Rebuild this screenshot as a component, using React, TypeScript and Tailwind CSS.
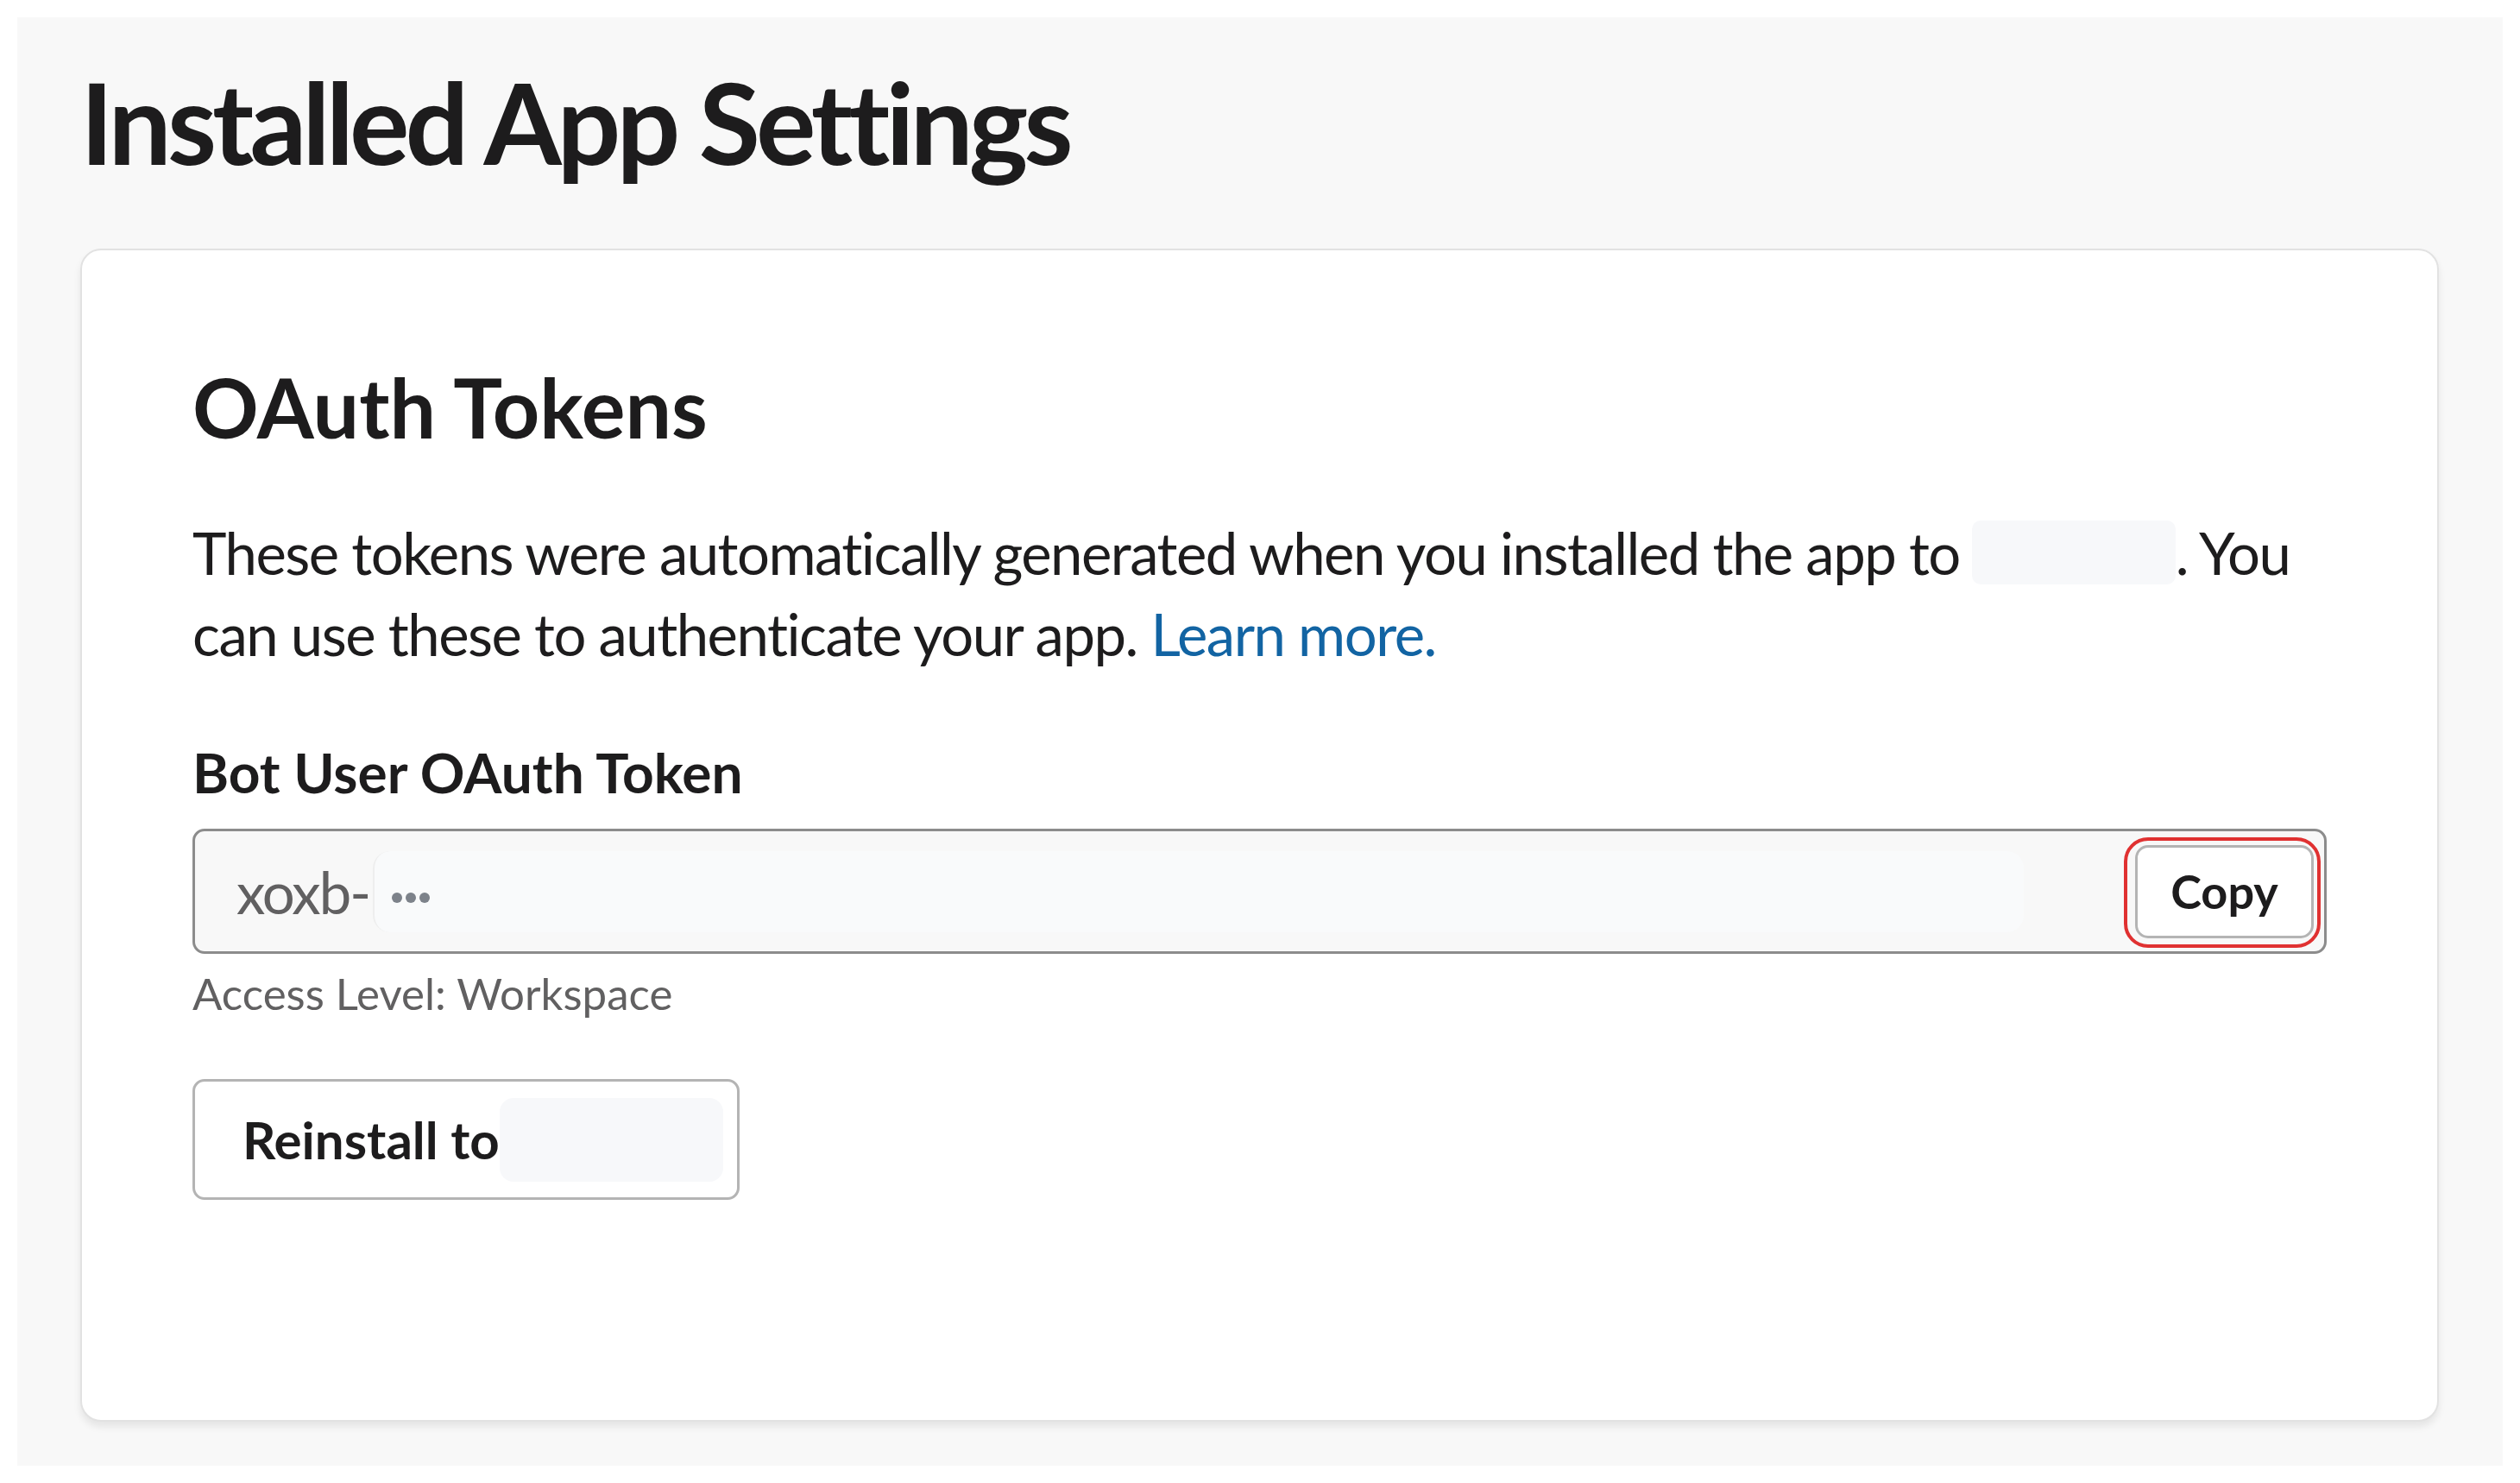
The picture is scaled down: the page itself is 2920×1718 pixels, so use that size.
import React from "react";

export default function App() {
  return (
    <div className="w-[2920px] h-[1718px] bg-white p-[20px]" style={{ fontFamily: "Lato, 'Noto Sans', sans-serif" }}>
      <div className="h-[1678px] bg-[#f8f8f8] pl-[73px] pr-[74px] pt-[43px]">
        <h1 className="text-[130px] leading-[156px] font-bold tracking-[-5px] text-[#1d1c1d] mb-[69px] whitespace-nowrap">Installed App Settings</h1>
        <div className="h-[1359px] bg-white border-2 border-[#e2e2e2] rounded-[24px] shadow-[0_6px_8px_rgba(0,0,0,0.08)] px-[128px] pt-[124px]">
          <h2 className="text-[95px] leading-[114px] font-bold text-[#1d1c1d] mb-[65px] whitespace-nowrap">OAuth Tokens</h2>
          <p className="text-[67px] leading-[94px] tracking-[-1.5px] text-[#1d1c1d] mb-[78px]">
            <span className="block whitespace-nowrap">
              These tokens were automatically generated when you installed the app to
              <span className="inline-block align-[-11px] w-[236px] h-[74px] bg-[#f7f8fa] rounded-[10px] ml-[14px]"></span>
              . You
            </span>
            <span className="block whitespace-nowrap">
              can use these to authenticate your app. <span className="text-[#1264a3]">Learn more.</span>
            </span>
          </p>
          <div className="text-[64px] leading-[72px] font-bold text-[#1d1c1d] mb-[29px] whitespace-nowrap">Bot User OAuth Token</div>
          <div className="relative h-[145px] bg-[#f8f8f8] border-[3px] border-[#8c8c8c] rounded-[14px] flex items-center pl-[48px] pr-[12px]">
            <span className="text-[67px] leading-[80px] tracking-[-2px] text-[#616061]">xoxb-</span>
            <div className="ml-[4px] h-[94px] flex-1 bg-[#f9fafb] rounded-[20px] flex items-center pl-[20px] mr-[129px] border-l-2 border-[#eeeeee]">
              <div className="flex gap-[4px] mt-[14px]">
                <div className="w-[12px] h-[12px] rounded-full bg-[#7d828a]"></div>
                <div className="w-[12px] h-[12px] rounded-full bg-[#7d828a]"></div>
                <div className="w-[12px] h-[12px] rounded-full bg-[#7d828a]"></div>
              </div>
            </div>
            <div className="relative">
              <button className="w-[207px] h-[108px] bg-white border-[3px] border-[#b4b4b4] rounded-[15px] text-[54px] font-bold text-[#1d1c1d] flex items-center justify-center">Copy</button>
              <div className="absolute -left-[13px] -top-[9px] -right-[8px] -bottom-[11px] border-[4px] border-[#e03131] rounded-[28px] pointer-events-none"></div>
            </div>
          </div>
          <div className="text-[51px] leading-[56px] text-[#616061] mt-[18px] mb-[71px] whitespace-nowrap">Access Level: Workspace</div>
          <button className="w-[634px] h-[140px] bg-white border-[3px] border-[#b4b4b4] rounded-[14px] flex items-center pl-[55px] text-[60px] leading-[72px] font-bold text-[#1d1c1d] whitespace-nowrap">
            Reinstall to
            <span className="ml-[0px] inline-block w-[259px] h-[97px] bg-[#f7f8fa] rounded-[16px]"></span>
          </button>
        </div>
      </div>
    </div>
  );
}
